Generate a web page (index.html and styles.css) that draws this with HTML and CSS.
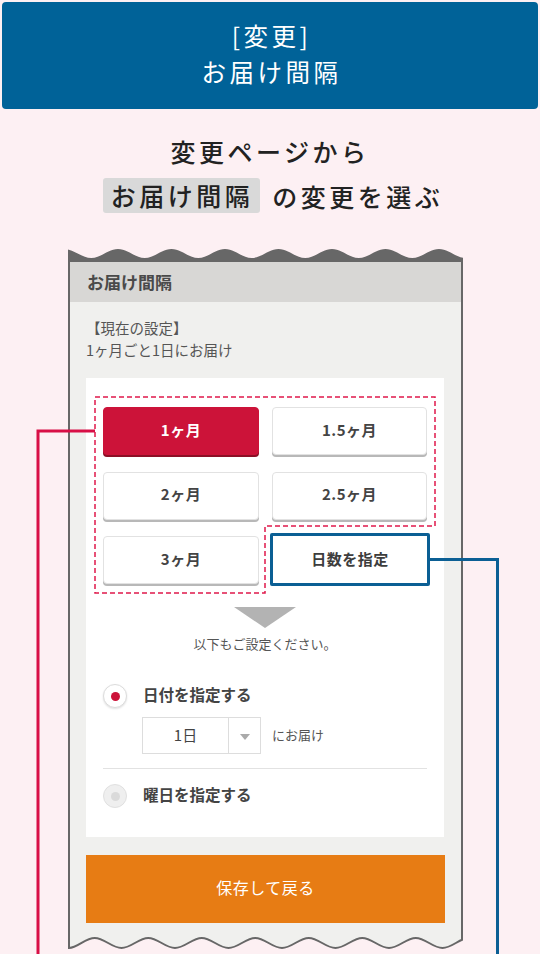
FILE: index.html
```html
<!DOCTYPE html>
<html lang="ja">
<head>
<meta charset="utf-8">
<title>お届け間隔の変更</title>
<link rel="stylesheet" href="styles.css">
</head>
<body>
<header class="banner">
  <h1 class="banner__title">[変更]<br>お届け間隔</h1>
</header>

<section class="lead">
  <p class="lead__line">変更ページから</p>
  <p class="lead__line lead__line--second"><span class="lead__mark">お届け間隔</span><span class="lead__rest">の変更を選ぶ</span></p>
</section>

<div class="phone">
  <svg class="phone__edge" width="395" height="14" viewBox="0 0 395 14" aria-hidden="true">
    <path fill="#676767" d="M-3.5 1 C6.13 1 13.62 10 23.25 10 S40.37 1 50 1 S67.12 10 76.75 10 S93.87 1 103.5 1 S120.62 10 130.25 10 S147.37 1 157 1 S174.12 10 183.75 10 S200.87 1 210.5 1 S227.62 10 237.25 10 S254.37 1 264 1 S281.12 10 290.75 10 S307.87 1 317.5 1 S334.62 10 344.25 10 S361.37 1 371 1 S388.12 10 397.75 10 L397.75 14 L-3.5 14 Z"/>
  </svg>
  <div class="phone__bar">お届け間隔</div>
  <div class="phone__body">
    <p class="current">【現在の設定】<br>1ヶ月ごと1日にお届け</p>
    <div class="card">
      <div class="options">
        <button class="opt opt--active">1ヶ月</button>
        <button class="opt">1.5ヶ月</button>
        <button class="opt">2ヶ月</button>
        <button class="opt">2.5ヶ月</button>
        <button class="opt">3ヶ月</button>
        <button class="opt opt--marked">日数を指定</button>
      </div>
      <div class="down-arrow"></div>
      <p class="hint">以下もご設定ください。</p>
      <div class="choice">
        <span class="radio radio--on"></span>
        <span class="choice__label">日付を指定する</span>
      </div>
      <div class="day-row">
        <div class="select">
          <span class="select__value">1日</span>
          <span class="select__caret"></span>
        </div>
        <span class="day-row__suffix">にお届け</span>
      </div>
      <hr class="divider">
      <div class="choice choice--second">
        <span class="radio radio--off"></span>
        <span class="choice__label">曜日を指定する</span>
      </div>
    </div>
    <button class="save">保存して戻る</button>
  </div>
  <svg class="phone__edge" width="395" height="16" viewBox="0 0 395 16" aria-hidden="true">
    <path fill="#f0f0ee" d="M0 0 L0 13 C9.63 13 17.12 3 26.75 3 S43.87 13 53.5 13 S70.62 3 80.25 3 S97.37 13 107 13 S124.12 3 133.75 3 S150.87 13 160.5 13 S177.62 3 187.25 3 S204.37 13 214 13 S231.12 3 240.75 3 S257.87 13 267.5 13 S284.62 3 294.25 3 S311.37 13 321 13 S338.12 3 347.75 3 S364.87 13 374.5 13 S391.62 3 401.25 3 L401.25 0 Z"/>
    <path fill="none" stroke="#676767" stroke-width="2" d="M1 0 L1 13 C9.63 13 17.12 3 26.75 3 S43.87 13 53.5 13 S70.62 3 80.25 3 S97.37 13 107 13 S124.12 3 133.75 3 S150.87 13 160.5 13 S177.62 3 187.25 3 S204.37 13 214 13 S231.12 3 240.75 3 S257.87 13 267.5 13 S284.62 3 294.25 3 S311.37 13 321 13 S338.12 3 347.75 3 S364.87 13 374.5 13 S391.62 3 401.25 3"/>
    <path fill="none" stroke="#676767" stroke-width="2" d="M394 0 L394 5"/>
  </svg>
</div>

<!-- callout lines linking the option groups -->
<svg class="guides" width="540" height="954" viewBox="0 0 540 954" aria-hidden="true">
  <polygon points="95,397 435,397 435,526 265,526 265,593 95,593" fill="none" stroke="#e0184b" stroke-width="1.5" stroke-dasharray="5 3"/>
  <polyline points="95,431 38,431 38,960" fill="none" stroke="#d80f46" stroke-width="3"/>
  <polyline points="430,559.5 497.5,559.5 497.5,960" fill="none" stroke="#0b5f94" stroke-width="3"/>
</svg>
</body>
</html>
```

FILE: styles.css
```css
* {
  box-sizing: border-box;
}

html,
body {
  margin: 0;
  padding: 0;
}

body {
  position: relative;
  width: 540px;
  height: 954px;
  overflow: hidden;
  background: #fdf0f3;
  font-family: "Noto Sans CJK JP", "Noto Sans", sans-serif;
  color: #333;
}

p,
h1 {
  margin: 0;
}

/* top banner */
.banner {
  margin: 2px 2px 0;
  height: 107px;
  background: #006298;
  border-radius: 4px;
  color: #fff;
  display: flex;
  flex-direction: column;
  align-items: center;
  justify-content: center;
}

.banner__title {
  font-size: 24.5px;
  font-weight: 400;
  line-height: 36px;
  letter-spacing: 3.5px;
  text-align: center;
  padding: 0 0 3px 3px;
}

/* lead copy */
.lead {
  padding-top: 24px;
  text-align: center;
  color: #222;
}

.lead__line {
  font-size: 25px;
  font-weight: 500;
  line-height: 36px;
  letter-spacing: 3.5px;
}

.lead__line--second {
  margin-top: 9px;
  height: 35px;
  display: flex;
  justify-content: center;
  align-items: center;
  padding-left: 6px;
}

.lead__mark {
  display: inline-block;
  height: 35px;
  line-height: 35px;
  padding: 0 7px 0 8px;
  background: #d9d9d9;
  border-radius: 3px;
}

.lead__rest {
  margin-left: 12px;
}

/* phone mock */
.phone {
  margin: 35px 0 0 68px;
  width: 395px;
}

.phone__edge {
  display: block;
}

.phone__bar {
  height: 40px;
  line-height: 40px;
  padding-left: 17px;
  background: #d8d7d5;
  border-left: 2px solid #676767;
  border-right: 2px solid #676767;
  font-size: 17px;
  font-weight: 700;
  color: #4a4a4a;
}

.phone__body {
  background: #f0f0ee;
  border-left: 2px solid #676767;
  border-right: 2px solid #676767;
  padding: 15px 17px 12px 16px;
}

.current {
  font-size: 14.5px;
  line-height: 22px;
  color: #555;
}

.card {
  margin-top: 17px;
  background: #fff;
  padding: 29px 17px 27px;
}

.options {
  display: grid;
  grid-template-columns: 156px 155px;
  grid-auto-rows: 48px;
  column-gap: 13px;
  row-gap: 16.5px;
}

.opt {
  font-family: inherit;
  font-size: 15px;
  font-weight: 700;
  color: #444;
  background: #fff;
  border: 1px solid #e2e2e2;
  border-radius: 4px;
  box-shadow: 0 2px 0 #b8b8b8;
  padding: 0 0 4px;
  letter-spacing: 0.5px;
}

.opt--active {
  background: #cc1339;
  border-color: #cc1339;
  color: #fff;
  box-shadow: 0 2px 0 #8c0f26;
}

.opt--marked {
  margin: -3px -3px -2px -2px;
  border: 3.5px solid #0b5f94;
  border-radius: 2px;
  box-shadow: none;
  color: #3d3d3d;
  padding-bottom: 2px;
}

.down-arrow {
  margin: 23px auto 0;
  width: 0;
  height: 0;
  border-left: 31px solid transparent;
  border-right: 31px solid transparent;
  border-top: 21px solid #b3b3b3;
}

.hint {
  margin-top: 6px;
  text-align: center;
  font-size: 13px;
  line-height: 20px;
  color: #555;
}

.choice {
  margin-top: 28px;
  height: 28px;
  display: flex;
  align-items: center;
  gap: 16px;
}

.choice--second {
  margin-top: 13px;
}

.radio {
  width: 24px;
  height: 24px;
  border-radius: 50%;
  border: 1px solid #dcdcdc;
  background: #fff;
  box-shadow: 0 1px 2px rgba(0, 0, 0, 0.12);
  display: flex;
  align-items: center;
  justify-content: center;
}

.radio::after {
  content: "";
  width: 9px;
  height: 9px;
  border-radius: 50%;
}

.radio--on::after {
  background: #cc1339;
}

.radio--off {
  background: #efefef;
  border-color: #e0e0e0;
  box-shadow: none;
}

.radio--off::after {
  background: #dadada;
}

.choice__label {
  font-size: 15.5px;
  font-weight: 700;
  color: #444;
  margin-top: -4px;
}

.day-row {
  margin: 7px 0 0 39px;
  display: flex;
  align-items: center;
}

.select {
  width: 119px;
  height: 37px;
  border: 1px solid #ddd;
  display: flex;
}

.select__value {
  width: 85px;
  line-height: 33px;
  text-align: center;
  font-size: 15px;
  color: #444;
}

.select__caret {
  flex: 1;
  border-left: 1px solid #ddd;
  display: flex;
  align-items: center;
  justify-content: center;
  padding-top: 3px;
}

.select__caret::after {
  content: "";
  width: 0;
  height: 0;
  border-left: 5px solid transparent;
  border-right: 5px solid transparent;
  border-top: 6px solid #aaa;
}

.day-row__suffix {
  margin-left: 11px;
  font-size: 13px;
  color: #555;
  margin-top: -2px;
}

.divider {
  margin: 14px 0 0;
  border: 0;
  border-top: 1px solid #e2e2e2;
}

.save {
  display: block;
  margin-top: 18px;
  width: 359px;
  height: 68px;
  border: 0;
  background: #e77c14;
  color: #fff;
  font-family: inherit;
  font-size: 16px;
  letter-spacing: 0.5px;
  padding: 0 0 4px;
}

/* callout overlay */
.guides {
  position: absolute;
  top: 0;
  left: 0;
  pointer-events: none;
}
```
